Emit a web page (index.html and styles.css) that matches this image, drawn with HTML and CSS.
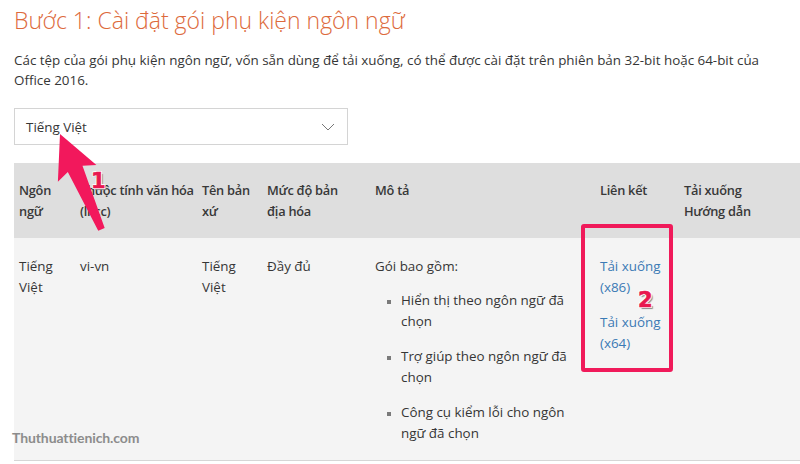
FILE: index.html
```html
<!DOCTYPE html>
<html lang="vi">
<head>
<meta charset="utf-8">
<title>Bước 1</title>
<link rel="stylesheet" href="styles.css">
</head>
<body>
<div class="page">
  <h1 class="title">Bước 1: Cài đặt gói phụ kiện ngôn ngữ</h1>
  <p class="intro">Các tệp của gói phụ kiện ngôn ngữ, vốn sẵn dùng để tải xuống, có thể được cài đặt trên phiên bản 32-bit hoặc 64-bit của Office 2016.</p>
  <div class="select">
    <span>Tiếng Việt</span>
    <svg class="chev" width="14" height="8" viewBox="0 0 14 8"><path d="M1 1 L7 7 L13 1" fill="none" stroke="#777" stroke-width="1"/></svg>
  </div>
  <table class="langs">
    <colgroup>
      <col class="c1"><col class="c2"><col class="c3"><col class="c4"><col class="c5"><col class="c6"><col class="c7">
    </colgroup>
    <thead>
      <tr>
        <th>Ngôn<br>ngữ</th>
        <th>Thuộc tính văn hóa<br>(ll-cc)</th>
        <th>Tên bản<br>xứ</th>
        <th>Mức độ bản<br>địa hóa</th>
        <th>Mô tả</th>
        <th>Liên kết</th>
        <th>Tải xuống<br>Hướng dẫn</th>
      </tr>
    </thead>
    <tbody>
      <tr>
        <td>Tiếng Việt</td>
        <td>vi-vn</td>
        <td>Tiếng Việt</td>
        <td>Đầy đủ</td>
        <td>
          <div>Gói bao gồm:</div>
          <ul class="items">
            <li>Hiển thị theo ngôn ngữ đã chọn</li>
            <li>Trợ giúp theo ngôn ngữ đã chọn</li>
            <li>Công cụ kiểm lỗi cho ngôn ngữ đã chọn</li>
          </ul>
        </td>
        <td>
          <a class="dl" href="#">Tải xuống (x86)</a>
          <a class="dl" href="#">Tải xuống (x64)</a>
        </td>
        <td></td>
      </tr>
    </tbody>
  </table>

  <div class="watermark">Thuthuattienich.com</div>

  <svg class="arrow" width="800" height="464" viewBox="0 0 800 464">
    <g transform="translate(60,134) rotate(-23.5)">
      <path d="M0 0 L21 43 L8 38 L3.5 104 L-3.5 104 L-8 38 L-21 43 Z" fill="#f2185c"/>
    </g>
  </svg>
  <div class="mark mark1">1</div>
  <div class="redbox"></div>
  <div class="mark mark2">2</div>
</div>
</body>
</html>
```

FILE: styles.css
```css
html, body {
  margin: 0;
  padding: 0;
  background: #ffffff;
}
body {
  font-family: "Open Sans", "Noto Sans", sans-serif;
  font-size: 13.4px;
  color: #363636;
  overflow: hidden;
}
.page {
  position: relative;
  width: 800px;
  height: 464px;
  padding-left: 14px;
  box-sizing: border-box;
}
.title {
  margin: 0;
  padding-top: 4px;
  font-size: 23px;
  line-height: 32px;
  font-weight: 300;
  color: #dd6a3c;
}
.intro {
  margin: 14px 0 0;
  width: 770px;
  line-height: 20px;
}
.select {
  margin-top: 18px;
  width: 334px;
  height: 37px;
  box-sizing: border-box;
  border: 1px solid #d4d4d4;
  display: flex;
  align-items: center;
  justify-content: space-between;
  padding: 0 12px 0 11px;
}
.select span {
  line-height: 20px;
}
.chev {
  display: block;
}
.langs {
  margin-top: 18px;
  width: 786px;
  table-layout: fixed;
  border-collapse: collapse;
  line-height: 21px;
}
.c1 { width: 61px; }
.c2 { width: 122px; }
.c3 { width: 65px; }
.c4 { width: 108px; }
.c5 { width: 225px; }
.c6 { width: 84px; }
.c7 { width: 121px; }
.langs th {
  background: #dedede;
  text-align: left;
  font-size: 12.8px;
  font-weight: 600;
  letter-spacing: -0.25px;
  vertical-align: top;
  white-space: nowrap;
  overflow: hidden;
  padding: 17px 0 16px 5px;
  color: #383838;
}
.langs td {
  background: #f4f4f4;
  vertical-align: top;
  padding: 18px 8px 16px 5px;
  border-bottom: 1px solid #d6d6d6;
}
.items {
  margin: 13px 0 0;
  padding-left: 26px;
  list-style: square;
}
.items li {
  padding-right: 12px;
}
.items li + li {
  margin-top: 14px;
}
.items li::marker {
  color: #7a7a7a;
  font-size: 10px;
}
.dl {
  display: block;
  color: #3b7ab5;
  text-decoration: none;
  padding-right: 10px;
}
.dl + .dl {
  margin-top: 14px;
}
.watermark {
  position: absolute;
  left: 12px;
  top: 429px;
  font-family: "Lato", sans-serif;
  font-weight: bold;
  font-size: 14px;
  letter-spacing: -0.1px;
  color: #8c8c8c;
}
.arrow {
  position: absolute;
  left: 0;
  top: 0;
  pointer-events: none;
}
.mark {
  position: absolute;
  font-family: "DejaVu Sans", sans-serif;
  font-weight: bold;
  font-size: 21px;
  line-height: 22px;
  color: #e8184f;
  -webkit-text-stroke: 0.6px #e8184f;
  text-shadow: 1px 1px 0 #ffffff, -1px -1px 0 #ffffff, 1px -1px 0 #ffffff, -1px 1px 0 #ffffff, 2px 2px 1px #8a8a8a;
}
.mark1 {
  left: 91px;
  top: 170px;
}
.mark2 {
  left: 638px;
  top: 289px;
}
.redbox {
  position: absolute;
  left: 581px;
  top: 224px;
  width: 92px;
  height: 148px;
  box-sizing: border-box;
  border: 4px solid #f01a5a;
  border-radius: 3px;
}
```
